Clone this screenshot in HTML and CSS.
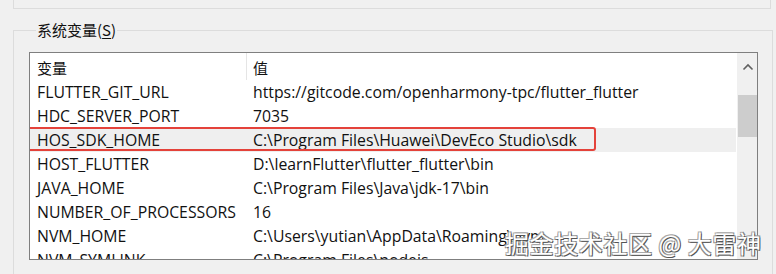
FILE: index.html
```html
<!DOCTYPE html>
<html lang="zh">
<head>
<meta charset="utf-8">
<link rel="stylesheet" href="styles.css">
</head>
<body>
<div class="topbox"></div>
<fieldset class="group">
  <legend class="legend">系统变量(<u>S</u>)</legend>
  <div class="listbox">
    <div class="list">
      <div class="header">
        <div class="hcell name">变量</div>
        <div class="hcell value">值</div>
      </div>
      <div class="row"><div class="cell name">FLUTTER_GIT_URL</div><div class="cell value">https://gitcode.com/openharmony-tpc/flutter_flutter</div></div>
      <div class="row"><div class="cell name">HDC_SERVER_PORT</div><div class="cell value">7035</div></div>
      <div class="row selected"><div class="cell name">HOS_SDK_HOME</div><div class="cell value">C:\Program Files\Huawei\DevEco Studio\sdk</div><div class="mark"></div></div>
      <div class="row"><div class="cell name">HOST_FLUTTER</div><div class="cell value">D:\learnFlutter\flutter_flutter\bin</div></div>
      <div class="row"><div class="cell name">JAVA_HOME</div><div class="cell value">C:\Program Files\Java\jdk-17\bin</div></div>
      <div class="row"><div class="cell name">NUMBER_OF_PROCESSORS</div><div class="cell value">16</div></div>
      <div class="row"><div class="cell name">NVM_HOME</div><div class="cell value">C:\Users\yutian\AppData\Roaming\nvm</div></div>
      <div class="row"><div class="cell name">NVM_SYMLINK</div><div class="cell value">C:\Program Files\nodejs</div></div>
    </div>
    <div class="scrollbar">
      <div class="arrow">
        <svg width="12" height="8" viewBox="0 0 12 8"><path d="M1.5 6.5 L6 2 L10.5 6.5" fill="none" stroke="#606060" stroke-width="1.6"/></svg>
      </div>
      <div class="thumb"></div>
    </div>
  </div>
</fieldset>
<div class="watermark">掘金技术社区 @ 大雷神</div>
</body>
</html>
```
FILE: styles.css
```css
html, body {
  margin: 0;
  padding: 0;
  background: #f0f0f0;
  overflow: hidden;
  width: 776px;
  height: 274px;
}
body {
  font-family: "Open Sans", "Noto Sans CJK SC", sans-serif;
  font-size: 15.8px;
  color: #111;
  position: relative;
}
.topbox {
  margin-left: 13px;
  width: 758px;
  border: 1px solid #dcdcdc;
  border-top: none;
  box-sizing: border-box;
  height: 9px;
}
.group {
  margin: 12px 0 0 13px;
  width: 760px;
  box-sizing: border-box;
  border: 1px solid #dcdcdc;
  padding: 13px 0 0 15px;
  height: 260px;
}
.legend {
  font-family: "Noto Sans CJK SC", sans-serif;
  font-size: 15px;
  padding: 0 1px;
  margin-left: 7px;
  line-height: 18px;
  color: #111;
}
.legend u {
  text-decoration-thickness: 1px;
  text-underline-offset: 2px;
}
.listbox {
  width: 729px;
  height: 208px;
  box-sizing: border-box;
  border: 1px solid #7f7f7f;
  background: #fff;
  display: flex;
  overflow: hidden;
}
.list {
  width: 706px;
  flex: none;
}
.header {
  display: flex;
  height: 27px;
}
.hcell {
  font-family: "Noto Sans CJK SC", sans-serif;
  font-size: 15px;
  line-height: 29px;
}
.name {
  width: 217px;
  padding-left: 7px;
  box-sizing: border-box;
  flex: none;
}
.hcell.name {
  border-right: 1px solid #e5e5e5;
  height: 27px;
  width: 217px;
}
.value {
  padding-left: 6px;
  flex: 1;
  white-space: nowrap;
}
.row {
  display: flex;
  height: 24px;
  line-height: 24px;
  position: relative;
  white-space: nowrap;
}
.row.selected {
  background: #efefef;
}
.mark {
  position: absolute;
  left: -3px;
  top: -1px;
  width: 569px;
  height: 24px;
  border: 2px solid #e4423a;
  border-radius: 3px;
  box-sizing: border-box;
}
.scrollbar {
  width: 21px;
  flex: none;
  background: #f0f0f0;
  border-left: 1px solid #fff;
  position: relative;
}
.arrow {
  height: 24px;
  display: flex;
  align-items: center;
  justify-content: center;
  padding-top: 2px;
}
.thumb {
  margin: 16px 1px 0 1px;
  height: 42px;
  background: #cdcdcd;
}
.watermark {
  position: absolute;
  left: 505px;
  top: 228px;
  font-family: "Noto Sans CJK SC", sans-serif;
  font-size: 24px;
  letter-spacing: 0.6px;
  line-height: 30px;
  color: #fff;
  white-space: nowrap;
  text-shadow: 1px 1px 0 #555, -1px -1px 0 #aaa, 1px -1px 0 #888, -1px 1px 0 #888;
}
```
